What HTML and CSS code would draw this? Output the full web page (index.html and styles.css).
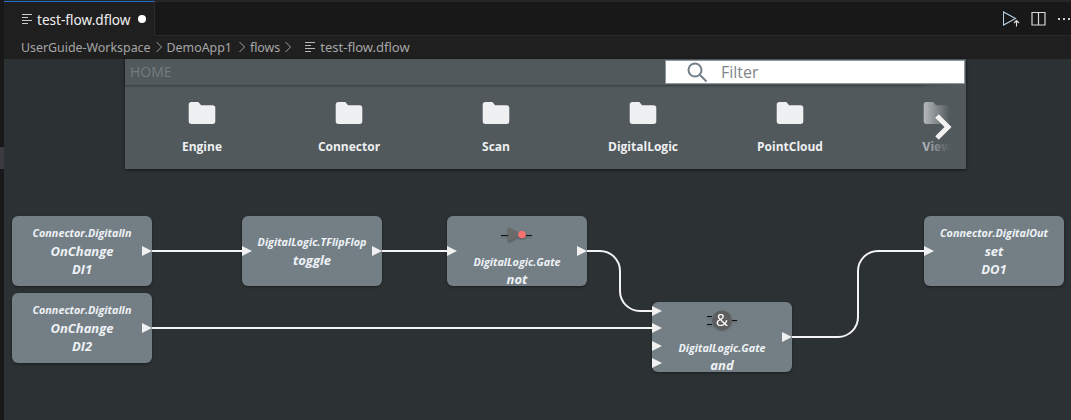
FILE: index.html
```html
<!DOCTYPE html>
<html>
<head>
<meta charset="utf-8">
<title>test-flow.dflow</title>
<link rel="stylesheet" href="styles.css">
</head>
<body>
<div class="app">
  <div class="rail"><div class="rail-thumb"></div></div>
  <main class="editor">
    <div class="tabbar">
      <div class="tab">
        <svg class="file-icon" width="12" height="14" viewBox="0 0 12 14"><path d="M1 2.500h10M1 5.500h6M1 8.500h10M1 11.500h6" stroke="#c8c8c8" stroke-width="1" fill="none"/></svg>
        <span class="tab-name">test-flow.dflow</span>
        <span class="dirty"></span>
      </div>
      <div class="actions">
        <svg width="17" height="16" viewBox="0 0 17 16"><path d="M.500 1v13l12-6.500z" fill="none" stroke="#b4cfe2" stroke-width="1.100"/><path d="M13.500 15.500V9.500M11 12l2.500-2.500L16 12" fill="none" stroke="#e0e0e0" stroke-width="1.100"/></svg>
        <svg width="15" height="14" viewBox="0 0 15 14"><path d="M1 .500h13v12.500H1zM7.500 .500v12.500" fill="none" stroke="#d8d8d8" stroke-width="1.200"/></svg>
        <svg width="14" height="4" viewBox="0 0 14 4"><path d="M1 1h2v2H1zM6 1h2v2H6zM11 1h2v2h-2z" fill="#d0d0d0"/></svg>
      </div>
    </div>
    <nav class="crumbs">
      <span>UserGuide-Workspace</span><svg class="chev" width="8" height="12" viewBox="0 0 8 12"><path d="M1.500 1l5 5-5 5" fill="none" stroke="#a0a0a0"/></svg>
      <span class="crumb-app">DemoApp1</span><svg class="chev" width="8" height="12" viewBox="0 0 8 12"><path d="M1.500 1l5 5-5 5" fill="none" stroke="#a0a0a0"/></svg>
      <span>flows</span><svg class="chev" width="8" height="12" viewBox="0 0 8 12"><path d="M1.500 1l5 5-5 5" fill="none" stroke="#a0a0a0"/></svg>
      <svg class="file-icon crumb-icon" width="12" height="14" viewBox="0 0 12 14"><path d="M1 2.500h10M1 5.500h6M1 8.500h10M1 11.500h6" stroke="#b8b8b8" stroke-width="1" fill="none"/></svg>
      <span class="crumb-file">test-flow.dflow</span>
    </nav>
    <section class="canvas">
      <div class="palette">
        <header class="palette-head">
          <span class="home">HOME</span>
          <div class="filter">
            <svg width="22" height="22" viewBox="0 0 22 22"><circle cx="9" cy="9" r="6.500" fill="none" stroke="#73808a" stroke-width="2"/><path d="M13.500 13.500l7 7" stroke="#73808a" stroke-width="2"/></svg>
            <span>Filter</span>
          </div>
        </header>
        <div class="palette-items">
          <div class="item"><svg class="folder" width="28" height="22" viewBox="0 0 29 24"><path d="M3 0h7.500l3 3.500H26a3 3 0 0 1 3 3V21a3 3 0 0 1-3 3H3a3 3 0 0 1-3-3V3a3 3 0 0 1 3-3z"/></svg><span>Engine</span></div>
          <div class="item"><svg class="folder" width="28" height="22" viewBox="0 0 29 24"><path d="M3 0h7.500l3 3.500H26a3 3 0 0 1 3 3V21a3 3 0 0 1-3 3H3a3 3 0 0 1-3-3V3a3 3 0 0 1 3-3z"/></svg><span>Connector</span></div>
          <div class="item"><svg class="folder" width="28" height="22" viewBox="0 0 29 24"><path d="M3 0h7.500l3 3.500H26a3 3 0 0 1 3 3V21a3 3 0 0 1-3 3H3a3 3 0 0 1-3-3V3a3 3 0 0 1 3-3z"/></svg><span>Scan</span></div>
          <div class="item"><svg class="folder" width="28" height="22" viewBox="0 0 29 24"><path d="M3 0h7.500l3 3.500H26a3 3 0 0 1 3 3V21a3 3 0 0 1-3 3H3a3 3 0 0 1-3-3V3a3 3 0 0 1 3-3z"/></svg><span>DigitalLogic</span></div>
          <div class="item"><svg class="folder" width="28" height="22" viewBox="0 0 29 24"><path d="M3 0h7.500l3 3.500H26a3 3 0 0 1 3 3V21a3 3 0 0 1-3 3H3a3 3 0 0 1-3-3V3a3 3 0 0 1 3-3z"/></svg><span>PointCloud</span></div>
          <div class="item"><svg class="folder" width="28" height="22" viewBox="0 0 29 24"><path d="M3 0h7.500l3 3.500H26a3 3 0 0 1 3 3V21a3 3 0 0 1-3 3H3a3 3 0 0 1-3-3V3a3 3 0 0 1 3-3z"/></svg><span>View</span></div>
          <div class="fade"></div>
          <svg class="next" width="20" height="28" viewBox="0 0 20 28"><path d="M3 3l11 11L3 25" fill="none" stroke="#f2f2f2" stroke-width="5"/></svg>
        </div>
      </div>

      <div class="node n1"><i class="type">Connector.DigitalIn</i><b>OnChange</b><b>DI1</b></div>
      <div class="node n2"><i class="type">Connector.DigitalIn</i><b>OnChange</b><b>DI2</b></div>
      <div class="node n3"><i class="type">DigitalLogic.TFlipFlop</i><b>toggle</b></div>
      <div class="node n4 gate">
        <svg class="gate-icon" width="32" height="20" viewBox="0 0 32 20"><path d="M0 11.500h7M25 11.500h6" stroke="#111" stroke-width="1"/><path d="M7 3l14 7.500L7 18z" fill="#6a6a6a"/><circle cx="21" cy="10.500" r="3.800" fill="#f87070"/></svg>
        <i class="type">DigitalLogic.Gate</i><b>not</b>
      </div>
      <div class="node n5 gate">
        <svg class="gate-icon" width="32" height="22" viewBox="0 0 32 22"><path d="M1 7.500h5M1 15.500h5M26 11.500h5" stroke="#111" stroke-width="1"/><circle cx="16" cy="11" r="9.500" fill="#5e5e5e"/><text class="amp" x="16" y="17">&amp;</text></svg>
        <i class="type">DigitalLogic.Gate</i><b>and</b>
      </div>
      <div class="node n6"><i class="type">Connector.DigitalOut</i><b>set</b><b>DO1</b></div>

      <svg class="wires" width="1067" height="361" viewBox="4 59 1067 361">
        <g fill="none" stroke="#f4f4f4" stroke-width="2">
          <path d="M152 251H242"/>
          <path d="M152 328H652"/>
          <path d="M382 251H447"/>
          <path d="M587 251H600a20 20 0 0 1 20 20V291a20 20 0 0 0 20 20H652"/>
          <path d="M792 337H838a20 20 0 0 0 20-20V271a20 20 0 0 1 20-20H924"/>
        </g>
        <g fill="#f0f0f0">
          <path d="M142 246l10 5-10 5z"/>
          <path d="M142 323l10 5-10 5z"/>
          <path d="M242 246l10 5-10 5z"/>
          <path d="M372 246l10 5-10 5z"/>
          <path d="M447 246l10 5-10 5z"/>
          <path d="M577 246l10 5-10 5z"/>
          <path d="M652 306l10 5-10 5z"/>
          <path d="M652 323l10 5-10 5z"/>
          <path d="M652 341l10 5-10 5z"/>
          <path d="M652 358l10 5-10 5z"/>
          <path d="M782 332l10 5-10 5z"/>
          <path d="M924 246l10 5-10 5z"/>
        </g>
      </svg>
    </section>
  </main>
</div>
</body>
</html>
```
FILE: styles.css
```css
* { box-sizing: border-box; }
html, body { margin: 0; height: 100%; overflow: hidden; background: #2c3134; }
.app { display: flex; width: 1071px; height: 420px; font-family: "Open Sans", "Noto Sans", sans-serif; }
.rail { width: 4px; flex: none; background: #181818; padding-top: 147px; }
.rail-thumb { height: 22px; background: #3b3b42; }
.editor { flex: 1; display: flex; flex-direction: column; min-width: 0; }
.tabbar { height: 36px; flex: none; display: flex; justify-content: space-between; background: #181818; border-top: 2px solid #262626; border-bottom: 1px solid #2a2a2a; }
.tab { width: 151px; height: 35px; margin-top: -1px; display: flex; align-items: center; gap: 4px; padding-left: 17px; background: #1f1f1f; border-top: 1px solid #1f6fd0; border-right: 1px solid #2a2a2a; margin-bottom: -1px; }
.tab-name { font-family: "Noto Sans", sans-serif; font-size: 13.6px; color: #f0f0f0; }
.dirty { width: 8px; height: 8px; margin-left: 4px; border-radius: 50%; background: #fff; }
.actions { display: flex; align-items: center; gap: 11px; }
.crumbs { height: 23px; flex: none; display: flex; align-items: center; gap: 4px; padding: 0 0 1px 17px; background: #1f1f1f; font-family: "Noto Sans", sans-serif; font-size: 12.4px; color: #a6a6a6; }
.crumb-app { margin-right: 2px; }
.crumb-icon { margin-left: 8px; }
.crumb-file { font-size: 13px; }
.canvas { position: relative; flex: 1; background: #2c3134; }
.palette { margin-left: 121px; width: 841px; height: 110px; background: #51595c; box-shadow: 0 1px 3px rgba(0, 0, 0, .5); display: flex; flex-direction: column; }
.palette-head { height: 26px; flex: none; display: flex; align-items: center; justify-content: space-between; padding-left: 5px; box-shadow: 0 1px 2px rgba(0, 0, 0, .35); }
.home { font-size: 14px; color: #747c7f; padding-bottom: 2px; }
.filter { width: 300px; height: 24px; margin-right: 1px; margin-bottom: 1px; display: flex; align-items: center; gap: 13px; padding-left: 20px; background: #fff; border: 1px solid #8b979c; font-size: 16px; color: #7d8589; }
.palette-items { position: relative; flex: 1; display: flex; padding-left: 3.5px; overflow: hidden; }
.item { flex: none; width: 147px; margin-top: 17px; display: flex; flex-direction: column; align-items: center; gap: 14px; font-size: 12px; font-weight: 700; color: #eef0f2; }
.folder { fill: #eff0f2; }
.fade { position: absolute; left: 798px; top: 0; width: 27px; height: 84px; background: linear-gradient(to right, rgba(81, 89, 92, .35), #51595c); }
.fade::after { content: ""; position: absolute; left: 27px; top: 0; width: 16px; height: 84px; background: #51595c; }
.next { position: absolute; left: 809px; top: 28px; }
.node { position: absolute; width: 140px; height: 70px; display: flex; flex-direction: column; align-items: center; justify-content: center; background: #747f85; border-radius: 6px; box-shadow: 0 1px 3px rgba(0, 0, 0, .4); color: #eef2f6; font-style: italic; line-height: 18px; }
.node b { font-size: 13px; font-weight: 700; }
.type { font-size: 10.8px; font-weight: 700; line-height: 18px; }
.n1 { left: 8px; top: 157px; }
.n2 { left: 8px; top: 234px; }
.n3 { left: 238px; top: 157px; }
.n4 { left: 443px; top: 157px; }
.n5 { left: 648px; top: 243px; }
.n6 { left: 920px; top: 157px; }
.gate { justify-content: flex-start; padding-top: 7px; }
.gate b { line-height: 15px; margin-top: 1px; }
.gate-icon { flex: none; margin-bottom: 8px; filter: drop-shadow(0 1px 1px rgba(0, 0, 0, .35)); }
.n4.gate { padding-top: 8px; }
.n4 .gate-icon { margin-bottom: 9px; }
.amp { fill: #fff; font-size: 17px; font-style: normal; font-weight: 400; text-anchor: middle; font-family: "Open Sans", sans-serif; }
.wires { position: absolute; left: 0; top: 0; pointer-events: none; }
```
